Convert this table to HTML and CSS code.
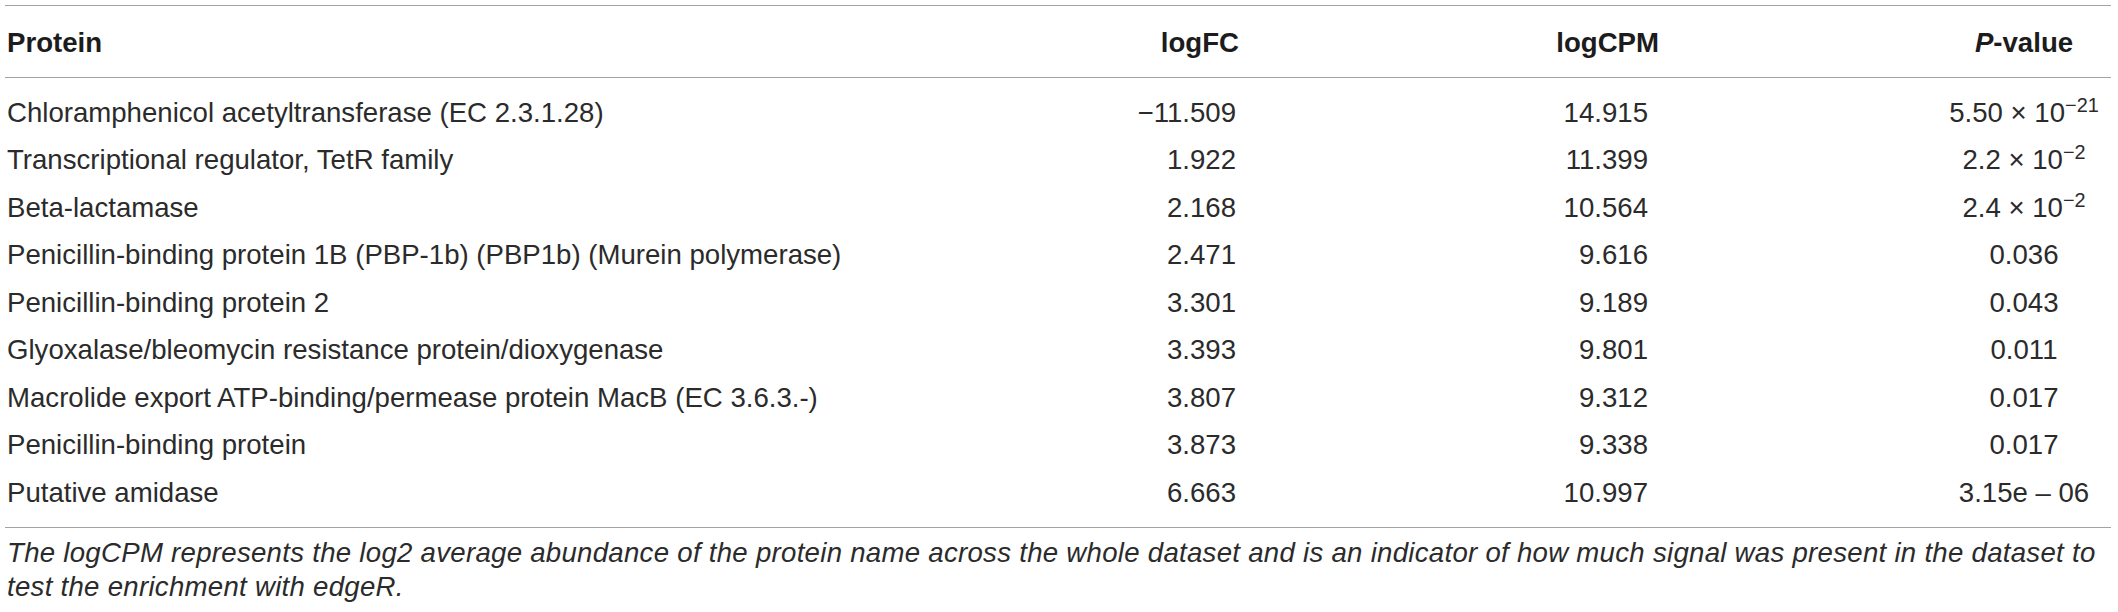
FILE: index.html
```html
<!DOCTYPE html>
<html lang="en">
<head>
<meta charset="utf-8">
<title>Table</title>
<link rel="stylesheet" href="styles.css">
</head>
<body>
<div class="wrap">
  <table class="data">
    <colgroup>
      <col class="c-name">
      <col class="c-fc">
      <col class="c-cpm">
      <col class="c-p">
    </colgroup>
    <thead>
      <tr>
        <th class="name">Protein</th>
        <th class="fc">logFC</th>
        <th class="cpm">logCPM</th>
        <th class="p"><i>P</i>-value</th>
      </tr>
    </thead>
    <tbody>
      <tr><td class="name">Chloramphenicol acetyltransferase (EC 2.3.1.28)</td><td class="fc">&minus;11.509</td><td class="cpm">14.915</td><td class="p">5.50 &times; 10<sup>&minus;21</sup></td></tr>
      <tr><td class="name">Transcriptional regulator, TetR family</td><td class="fc">1.922</td><td class="cpm">11.399</td><td class="p">2.2 &times; 10<sup>&minus;2</sup></td></tr>
      <tr><td class="name">Beta-lactamase</td><td class="fc">2.168</td><td class="cpm">10.564</td><td class="p">2.4 &times; 10<sup>&minus;2</sup></td></tr>
      <tr><td class="name">Penicillin-binding protein 1B (PBP-1b) (PBP1b) (Murein polymerase)</td><td class="fc">2.471</td><td class="cpm">9.616</td><td class="p">0.036</td></tr>
      <tr><td class="name">Penicillin-binding protein 2</td><td class="fc">3.301</td><td class="cpm">9.189</td><td class="p">0.043</td></tr>
      <tr><td class="name">Glyoxalase/bleomycin resistance protein/dioxygenase</td><td class="fc">3.393</td><td class="cpm">9.801</td><td class="p">0.011</td></tr>
      <tr><td class="name">Macrolide export ATP-binding/permease protein MacB (EC 3.6.3.-)</td><td class="fc">3.807</td><td class="cpm">9.312</td><td class="p">0.017</td></tr>
      <tr><td class="name">Penicillin-binding protein</td><td class="fc">3.873</td><td class="cpm">9.338</td><td class="p">0.017</td></tr>
      <tr><td class="name">Putative amidase</td><td class="fc">6.663</td><td class="cpm">10.997</td><td class="p">3.15e &ndash; 06</td></tr>
    </tbody>
  </table>
  <p class="note">The logCPM represents the log2 average abundance of the protein name across the whole dataset and is an indicator of how much signal was present in the dataset to test the enrichment with edgeR.</p>
</div>
</body>
</html>
```

FILE: styles.css
```css
html, body {
  margin: 0;
  padding: 0;
  background: #ffffff;
}

body {
  font-family: "Liberation Sans", Arial, sans-serif;
  color: #2b2b2b;
}

.wrap {
  margin-left: 5px;
  width: 2106px;
  padding-top: 5px;
}

.data {
  width: 2106px;
  table-layout: fixed;
  border-collapse: collapse;
  font-size: 27.6px;
  line-height: 47.5px;
}

.c-name { width: 1000px; }
.c-fc { width: 235px; }
.c-cpm { width: 420px; }
.c-p { width: 451px; }

.data thead tr {
  border-top: 1px solid #a3a3a3;
  border-bottom: 1px solid #a3a3a3;
}

.data tbody tr:last-child {
  border-bottom: 1px solid #a3a3a3;
}

.data th {
  font-weight: bold;
  color: #1c1c1c;
  padding: 13px 0 10.5px 0;
  white-space: nowrap;
}

.data td {
  padding: 0;
  white-space: nowrap;
  font-weight: normal;
}

.data tbody tr:first-child td {
  padding-top: 10.5px;
}

.data tbody tr:last-child td {
  padding-bottom: 11px;
}

.name {
  text-align: left;
  padding-left: 2px !important;
}

th.fc { text-align: right; padding-right: 1px; }
td.fc { text-align: right; padding-right: 4px; }

th.cpm { text-align: right; padding-right: 1px; }
td.cpm { text-align: right; padding-right: 12px; }

th.p, td.p {
  text-align: center;
  padding-left: 277px;
  padding-right: 0;
}

.data sup {
  font-size: 0.72em;
  line-height: 0;
  vertical-align: 0.5em;
}

.note {
  margin: 8px 0 0 0;
  padding-left: 2px;
  font-size: 27.6px;
  line-height: 34px;
  font-style: italic;
  letter-spacing: 0.28px;
  color: #2b2b2b;
}
```
